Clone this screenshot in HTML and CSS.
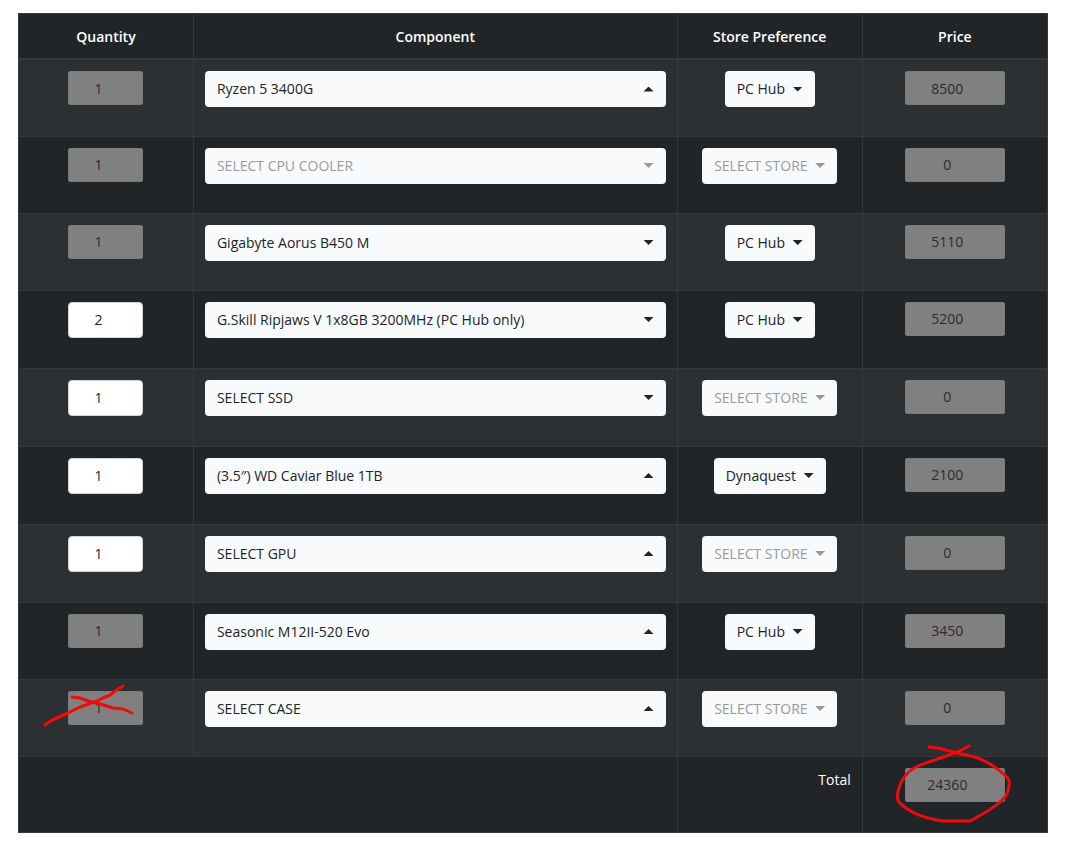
FILE: index.html
```html
<!DOCTYPE html>
<html lang="en">
<head>
    <meta charset="UTF-8">
    <meta name="viewport" content="width=device-width, initial-scale=1.0">
    <title>PC Builder</title>
    <link rel="stylesheet" href="styles.css">
</head>
<body>

    <table class="build-table">
        <thead>
            <tr>
                <th class="col-qty">Quantity</th>
                <th class="col-component">Component</th>
                <th class="col-store">Store Preference</th>
                <th class="col-price">Price</th>
            </tr>
        </thead>
        <tbody>
            <!-- CPU -->
            <tr>
                <td><input class="number qty" type="number" value="1" aria-label="CPU quantity" disabled></td>
                <td><span class="dropdown wide up"><select aria-label="CPU"><option>Ryzen 5 3400G</option></select></span></td>
                <td><span class="dropdown"><select aria-label="CPU store"><option>PC Hub</option></select></span></td>
                <td><input class="number price" type="number" value="8500" aria-label="CPU price" disabled></td>
            </tr>
            <!-- CPU cooler -->
            <tr>
                <td><input class="number qty" type="number" value="1" aria-label="CPU cooler quantity" disabled></td>
                <td><span class="dropdown wide off"><select aria-label="CPU cooler" disabled><option>SELECT CPU COOLER</option></select></span></td>
                <td><span class="dropdown off"><select aria-label="CPU cooler store" disabled><option>SELECT STORE</option></select></span></td>
                <td><input class="number price" type="number" value="0" aria-label="CPU cooler price" disabled></td>
            </tr>
            <!-- Motherboard -->
            <tr>
                <td><input class="number qty" type="number" value="1" aria-label="Motherboard quantity" disabled></td>
                <td><span class="dropdown wide"><select aria-label="Motherboard"><option>Gigabyte Aorus B450 M</option></select></span></td>
                <td><span class="dropdown"><select aria-label="Motherboard store"><option>PC Hub</option></select></span></td>
                <td><input class="number price" type="number" value="5110" aria-label="Motherboard price" disabled></td>
            </tr>
            <!-- RAM -->
            <tr class="editable">
                <td><input class="number qty" type="number" value="2" min="1" aria-label="RAM quantity"></td>
                <td><span class="dropdown wide"><select aria-label="RAM"><option>G.Skill Ripjaws V 1x8GB 3200MHz (PC Hub only)</option></select></span></td>
                <td><span class="dropdown"><select aria-label="RAM store"><option>PC Hub</option></select></span></td>
                <td><input class="number price" type="number" value="5200" aria-label="RAM price" disabled></td>
            </tr>
            <!-- SSD -->
            <tr class="editable">
                <td><input class="number qty" type="number" value="1" min="1" aria-label="SSD quantity"></td>
                <td><span class="dropdown wide"><select aria-label="SSD"><option>SELECT SSD</option></select></span></td>
                <td><span class="dropdown off"><select aria-label="SSD store" disabled><option>SELECT STORE</option></select></span></td>
                <td><input class="number price" type="number" value="0" aria-label="SSD price" disabled></td>
            </tr>
            <!-- HDD -->
            <tr class="editable">
                <td><input class="number qty" type="number" value="1" min="1" aria-label="HDD quantity"></td>
                <td><span class="dropdown wide up"><select aria-label="HDD"><option>(3.5″) WD Caviar Blue 1TB</option></select></span></td>
                <td><span class="dropdown"><select aria-label="HDD store"><option>Dynaquest</option></select></span></td>
                <td><input class="number price" type="number" value="2100" aria-label="HDD price" disabled></td>
            </tr>
            <!-- GPU -->
            <tr class="editable">
                <td><input class="number qty" type="number" value="1" min="1" aria-label="GPU quantity"></td>
                <td><span class="dropdown wide up"><select aria-label="GPU"><option>SELECT GPU</option></select></span></td>
                <td><span class="dropdown off"><select aria-label="GPU store" disabled><option>SELECT STORE</option></select></span></td>
                <td><input class="number price" type="number" value="0" aria-label="GPU price" disabled></td>
            </tr>
            <!-- PSU -->
            <tr>
                <td><input class="number qty" type="number" value="1" aria-label="PSU quantity" disabled></td>
                <td><span class="dropdown wide up"><select aria-label="PSU"><option>Seasonic M12II-520 Evo</option></select></span></td>
                <td><span class="dropdown"><select aria-label="PSU store"><option>PC Hub</option></select></span></td>
                <td><input class="number price" type="number" value="3450" aria-label="PSU price" disabled></td>
            </tr>
            <!-- Case -->
            <tr>
                <td>
                    <div class="marked">
                        <input class="number qty" type="number" value="1" aria-label="Case quantity" disabled>
                        <svg class="mark cross" width="96" height="48" viewBox="0 0 96 48" aria-hidden="true">
                            <path d="M5 42C9 38 16 35 28 30L40 24L57 18L63 15L70 12L75 8L83 3"/>
                            <path d="M32 14L40 15L48 18L57 20L73 25L83 26L92 30"/>
                        </svg>
                    </div>
                </td>
                <td><span class="dropdown wide up"><select aria-label="Case"><option>SELECT CASE</option></select></span></td>
                <td><span class="dropdown off"><select aria-label="Case store" disabled><option>SELECT STORE</option></select></span></td>
                <td><input class="number price" type="number" value="0" aria-label="Case price" disabled></td>
            </tr>
        </tbody>
        <tfoot>
            <tr>
                <td colspan="2"></td>
                <td class="total-label"><label for="total">Total</label></td>
                <td>
                    <div class="marked">
                        <input class="number price" id="total" type="number" value="24360" disabled>
                        <svg class="mark circle" width="120" height="84" viewBox="0 0 120 84" aria-hidden="true">
                            <path d="M36 5L45 6L64 11L82 15C96 20 104 26 114 35Q117 38 116 43Q116 53 107 60C98 68 88 73 77 79H50C30 76 14 69 6 60Q3 57 5 50C7 40 12 30 25 24C36 19 50 16 67 9L76 4"/>
                        </svg>
                    </div>
                </td>
            </tr>
        </tfoot>
    </table>

</body>
</html>
```

FILE: styles.css
```css
* {
    box-sizing: border-box;
}

body {
    margin: 0;
    padding: 13px 17px 27px 18px;
    background-color: #fff;
    color: #fff;
    font-family: "Segoe UI", "Open Sans", sans-serif;
    font-size: 14px;
    line-height: 24px;
}

.build-table {
    width: 100%;
    border-collapse: collapse;
    table-layout: fixed;
    background-color: #212527;
}

.col-qty {
    width: 17%;
}

.col-component {
    width: 47%;
}

.col-store,
.col-price {
    width: 18%;
}

th,
td {
    border: 1px solid #32383b;
    text-align: center;
    vertical-align: top;
}

th {
    padding: 11px 11px 9px;
    border-bottom-width: 2px;
    font-weight: 600;
}

td {
    height: 77px;
    padding: 11px 11px 0;
}

.editable td {
    height: 78px;
}

tfoot td {
    height: 76px;
}

tbody tr:nth-child(odd) {
    background-color: #2c3033;
}

.number {
    display: block;
    height: 34px;
    margin: 0 auto;
    padding: 0;
    border: 1px solid #ced4da;
    border-radius: 4px;
    background-color: #fff;
    color: #212529;
    font: inherit;
    text-align: center;
}

.number:enabled {
    height: 36px;
}

.number:disabled {
    border-color: #767b7b;
    border-radius: 2px;
    background-color: #808080;
    color: #30282f;
}

/* keep the room of the arrows, only show them on hover */
.number::-webkit-inner-spin-button {
    width: 15px;
    opacity: 0;
}

.number:enabled:hover::-webkit-inner-spin-button {
    opacity: 1;
}

.qty {
    width: 75px;
}

.price {
    width: 100px;
}

/* select and caret share one grid cell */
.dropdown {
    display: inline-grid;
    align-items: center;
    vertical-align: top;
    color: #212529;
}

.dropdown.wide {
    display: grid;
}

.dropdown select {
    grid-area: 1 / 1;
    height: 36px;
    margin: 0;
    padding: 0 29px 0 12px;
    border: 0;
    border-radius: 4px;
    background-color: #f8fafc;
    color: inherit;
    font: inherit;
    opacity: 1;
    appearance: none;
}

.dropdown::after {
    content: "";
    grid-area: 1 / 1;
    justify-self: end;
    width: 10px;
    height: 5px;
    margin-right: 12px;
    background-color: currentColor;
    clip-path: polygon(0 0, 100% 0, 50% 100%);
    pointer-events: none;
}

.dropdown.up::after {
    clip-path: polygon(50% 0, 100% 100%, 0 100%);
}

.dropdown.off {
    color: #999a98;
}

.total-label {
    text-align: right;
}

/* red pen marks */
.marked {
    position: relative;
    width: fit-content;
    margin: 0 auto;
}

.mark {
    position: absolute;
    fill: none;
    stroke: #f20a0a;
    stroke-width: 3;
    stroke-linecap: round;
    stroke-linejoin: round;
    pointer-events: none;
}

.cross {
    top: -8px;
    left: -28px;
}

.circle {
    top: -26px;
    left: -12px;
}
```
